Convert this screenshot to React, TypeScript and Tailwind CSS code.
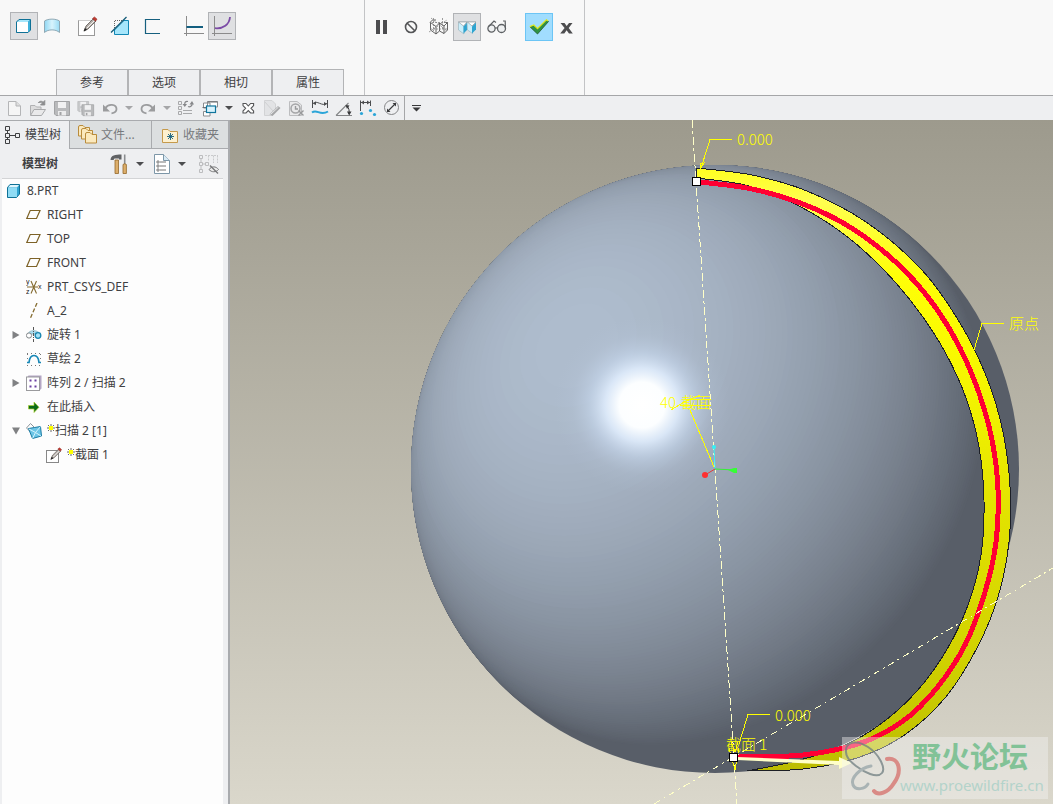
import type { ReactNode } from 'react'
import clsx from 'clsx'

type Point = [number, number]

/* ---------- geometry helpers ---------- */

// Catmull-Rom through the points, as cubic bezier segments
function smooth(points: Point[], start = 'M') {
  let d = `${start}${points[0][0]} ${points[0][1]}`
  for (let i = 0; i < points.length - 1; i++) {
    const p0 = points[i - 1] ?? points[i]
    const p1 = points[i]
    const p2 = points[i + 1]
    const p3 = points[i + 2] ?? p2
    d += `C${p1[0] + (p2[0] - p0[0]) / 6} ${p1[1] + (p2[1] - p0[1]) / 6} ${p2[0] - (p3[0] - p1[0]) / 6} ${p2[1] - (p3[1] - p1[1]) / 6} ${p2[0]} ${p2[1]}`
  }
  return d
}

const outerEdge: Point[] = [
  [696, 168], [752, 175], [807, 191], [866, 222], [921, 269], [960, 323], [987, 378], [1003, 432],
  [1010, 487], [1009, 542], [998, 597], [977, 648], [945, 698], [903, 736], [857, 758], [803, 769], [747, 771],
]

const innerEdge: Point[] = [
  [696, 178], [745, 185], [793, 203], [841, 232], [882, 268], [917, 309], [945, 352], [966, 398],
  [979, 447], [984, 500], [981, 555], [968, 605], [946, 651], [917, 691], [882, 723], [843, 746],
  [796, 761], [747, 771],
]

const trajectory: Point[] = [
  [700, 182], [747, 188], [792, 200], [836, 219], [873, 243], [907, 273], [936, 308], [960, 348],
  [979, 393], [992, 440], [998, 490], [996, 542], [985, 592], [965, 645], [936, 689], [903, 721],
  [861, 743], [803, 755], [737, 757],
]

const sphere = { cx: 715, cy: 469, r: 304 }
const light = { x: -0.46, y: -0.41, z: 0.79 }
const LEVELS = 85

// One closed region for every brightness step: the part of the sphere lit at least that much
function shadeRegions() {
  const { r } = sphere
  const flat = Math.hypot(light.x, light.y)
  const regions = []
  for (let i = 1; i < LEVELS; i++) {
    const c = i / LEVELS
    const k = Math.sqrt(1 - c * c)
    const a = r * k * light.z
    const b = r * k
    const u = c * flat * r
    let d = `M${u - a} 0A${a} ${b} 0 1 1 ${u + a} 0A${a} ${b} 0 1 1 ${u - a} 0Z`
    if (c < flat) {
      const tu = (r * c) / flat
      const tv = Math.sqrt(r * r - tu * tu)
      d = `M${tu} ${-tv}A${r} ${r} 0 0 1 ${tu} ${tv}A${a} ${b} 0 0 1 ${u - a} 0A${a} ${b} 0 0 1 ${tu} ${-tv}Z`
    }
    regions.push({ d, fill: `rgb(${88 + 87 * c},${94 + 95 * c},${104 + 102 * c})` })
  }
  return regions
}

const regions = shadeRegions()
const lightAngle = (Math.atan2(light.y, light.x) * 180) / Math.PI

/* ---------- icons ---------- */

function Icon({ children, small }: { children: ReactNode; small?: boolean }) {
  return (
    <svg viewBox={small ? '0 0 16 16' : '0 0 20 20'} className={clsx('shrink-0', small ? 'size-4' : 'size-5')} fill="none" aria-hidden="true">
      {children}
    </svg>
  )
}

const SolidIcon = () => (
  <Icon>
    <path d="M2.5 6L5 3.5H16.5V14L14 16.5H2.5Z" fill="#1a86b0" stroke="#0f7196" />
    <path d="M3 6L5.2 4H16L14 6Z" fill="#a6e6fb" />
    <path d="M14 6L16 4V14L14 16Z" fill="#3fb2dc" />
    <rect x="3" y="6" width="11" height="10" fill="#fff" />
  </Icon>
)

const SurfaceIcon = () => (
  <Icon>
    <path d="M2.5 5C6 2.5 14 2.5 17.5 5V16.5C14 13 6 13 2.5 16.5Z" fill="url(#quilt)" stroke="#8fa9b5" />
  </Icon>
)

const PencilShape = () => (
  <>
    <path d="M6 15L8 10L15 3L18 5L10 13Z" fill="#b5afaa" stroke="#5d5854" strokeWidth=".8" />
    <path d="M9 12L16.5 4.5" stroke="#f3f1ef" strokeWidth="1" />
    <path d="M14.5 2.5L16.5 1L19 3.2L17.5 5.2Z" fill="#c23b32" stroke="#8f2a24" strokeWidth=".6" />
    <path d="M5.6 15.4L7 12L9 13.8Z" fill="#222" />
  </>
)

const SketchIcon = () => (
  <Icon>
    <rect x=".5" y="4.5" width="16" height="15" fill="#fff" stroke="#9a9a9a" />
    <path d="M.5 4.5H16.5" stroke="#ccc" />
    <PencilShape />
  </Icon>
)

const RemoveMaterialIcon = () => (
  <Icon>
    <path d="M4.5 14V4.5H14" stroke="#666" strokeDasharray="1 1" />
    <path d="M18.5 4.5V18.5H4.5V14L14 4.5Z" fill="#a6e6fb" stroke="#1287b4" />
    <path d="M1 16.5L16.5 1" stroke="#145b78" strokeWidth="1.3" />
  </Icon>
)

const ThickenIcon = () => (
  <Icon>
    <path d="M18 3.5H3.5V17.5H18" stroke="#16607f" strokeWidth="1.2" />
  </Icon>
)

const ConstantIcon = () => (
  <Icon>
    <path d="M2.5 0V20M0 17.5H20" stroke="#8b8b8b" />
    <path d="M2.5 11H19" stroke="#135f80" strokeWidth="2" />
  </Icon>
)

const VariableIcon = () => (
  <Icon>
    <path d="M2.5 0V20M0 17.5H20" stroke="#8b8b8b" />
    <path d="M3 12.2C11 13 17.5 8.5 18 1" stroke="#7c4ca6" strokeWidth="1.8" />
  </Icon>
)

const PauseIcon = () => (
  <Icon>
    <path d="M5 3H9V17H5ZM12 3H16V17H12Z" fill="#4d4d4f" />
  </Icon>
)

const NoPreviewIcon = () => (
  <Icon>
    <circle cx="10" cy="10" r="5.5" stroke="#555658" strokeWidth="1.6" />
    <path d="M6 6L14 14" stroke="#555658" strokeWidth="1.6" />
  </Icon>
)

const WireframeIcon = () => (
  <Icon>
    <path d="M1 5.5L3.5 3H7M1.5 5.5V13L7 17L10.5 14V6L7 9.5V17M1.5 5.5L7 9.5M10.5 14L15 16.5L18.5 13V5.5L15 9V16.5M10.5 6L15 9M18.5 5.5H15" stroke="#555" strokeWidth=".9" />
    <path d="M4.5 1V14M13.5 1V12M0 15L18 3M2 1L18 14M1 12H19M3 5.5H17" stroke="#858585" strokeWidth=".8" strokeDasharray="2 1" />
  </Icon>
)

const VerifyIcon = () => (
  <Icon>
    <path d="M1.5 5H10L7 8.5V17L1.5 13Z" fill="#c9effc" stroke="#9bb6c0" strokeWidth=".7" />
    <path d="M10 5.5V13L6.5 16.5V9.5Z" fill="#2fa4d0" />
    <path d="M10 5H19L15.5 8.5V16.5L10.5 13Z" fill="#c9effc" stroke="#9bb6c0" strokeWidth=".7" />
    <path d="M19 5.5V12.5L15 16.5V9.5Z" fill="#2fa4d0" />
    <path d="M1.5 5H10L6.5 9ZM10.5 5H19L15 9Z" fill="#fff" stroke="#8a8f92" strokeWidth=".6" />
  </Icon>
)

const GlassesIcon = () => (
  <Icon>
    <circle cx="4.5" cy="11.5" r="3.6" fill="#eef0f1" stroke="#5d6063" strokeWidth="1.3" />
    <circle cx="14.5" cy="11.5" r="4" fill="#eef0f1" stroke="#5d6063" strokeWidth="1.3" />
    <path d="M8 11L10.8 10.8M1.2 10L7 4L9 5.5M18.4 11L18.2 4L16 4" stroke="#5d6063" strokeWidth="1.2" />
  </Icon>
)

const AcceptIcon = () => (
  <Icon>
    <path d="M1.2 10L5 8.5L8.5 12L17.5 3.2L19.5 4.5L8.5 17Z" fill="#2e9444" stroke="#23592f" strokeWidth=".8" />
    <path d="M.8 9.6L4.8 8L8.5 11.6L17.4 2.8L19.2 4" stroke="#ddea1e" strokeWidth="1.3" />
  </Icon>
)

const CancelIcon = () => (
  <Icon>
    <path d="M3.5 6H7.5L9.7 9L12 6H15.5L11.7 11L15.8 16.5H12L9.6 13.3L7.3 16.5H3.2L7.6 11Z" fill="#4d4d4f" />
  </Icon>
)

const NewIcon = () => (
  <Icon>
    <path d="M4.5 3.5H12L16.5 8V17.5H4.5Z" fill="#f5f5f5" stroke="#b4b5b7" />
    <path d="M12 3.5V8H16.5" fill="#ddd" stroke="#b4b5b7" />
  </Icon>
)

const OpenIcon = () => (
  <Icon>
    <path d="M2.5 17V7.5H7L8.5 9H13V11" fill="#dcdcdd" stroke="#b0b1b3" />
    <path d="M2.5 17.5L6 11.5H17.5L13.5 17.5Z" fill="#e9e9ea" stroke="#a9aaac" />
    <path d="M10 5C12 2.5 14 3 15.5 4.5M16.8 2.5V7H12.5Z" stroke="#8c8d8f" fill="#8c8d8f" strokeWidth=".9" />
  </Icon>
)

const DiskShape = () => (
  <>
    <path d="M2.5 3.5H17.5V17.5H4L2.5 16Z" fill="#b9babc" stroke="#a2a3a5" />
    <rect x="6" y="4" width="8" height="6" fill="#f1f1f2" />
    <rect x="6" y="13" width="8" height="4.5" fill="#ececed" />
    <rect x="7.5" y="14" width="2" height="3" fill="#a2a3a5" />
  </>
)

const SaveIcon = () => (
  <Icon>
    <DiskShape />
  </Icon>
)

const SaveCopyIcon = () => (
  <Icon>
    <g transform="translate(0 1) scale(.72)" opacity=".7">
      <DiskShape />
    </g>
    <g transform="translate(4 4) scale(.78)">
      <DiskShape />
    </g>
  </Icon>
)

const UndoIcon = () => (
  <Icon>
    <path d="M5.5 10C8 5.5 16.5 6 16.5 11C16.5 14 14 15 11.5 15.3" stroke="#9b9c9e" strokeWidth="1.8" />
    <path d="M3 6.5V13.5H10Z" fill="#9b9c9e" />
  </Icon>
)

const RedoIcon = () => (
  <Icon>
    <path d="M14.5 10C12 5.5 3.5 6 3.5 11C3.5 14 6 15 8.5 15.3" stroke="#9b9c9e" strokeWidth="1.8" />
    <path d="M17 6.5V13.5H10Z" fill="#9b9c9e" />
  </Icon>
)

const RegenerateIcon = () => (
  <Icon>
    <path d="M2.5 3.5H5.5V6.5H2.5ZM2.5 8.5H5.5V11.5H2.5ZM2.5 13.5H5.5V16.5H2.5ZM7 12.5H16M7 15.5H16" stroke="#a8a9ab" />
    <path d="M9 7C8 4 10 3 12 3.5M16 5.5C16.5 8 14 9.5 12 8.5" stroke="#86878a" strokeWidth="1.2" />
    <path d="M6.5 6H11L8.8 9ZM16 3L18 6.5H13.5Z" fill="#86878a" />
  </Icon>
)

const WindowsIcon = () => (
  <Icon>
    <path d="M7.5 3.5H17.5V9H7.5ZM3.5 5H10V10H3.5ZM3.5 13.5H10V18H3.5Z" fill="#fff" stroke="#8a8c8f" />
    <path d="M7.5 4H17.5M2.5 9.5H8" stroke="#6c6e71" />
    <rect x="6.5" y="8" width="9" height="6.5" fill="#d8f3fd" stroke="#10759d" strokeWidth="1.2" />
  </Icon>
)

const CloseWindowIcon = () => (
  <Icon>
    <path d="M5 5.5H8L10.3 8L12.6 5.5H15.6V7.5L13 10.3L15.6 13V15H12.6L10.3 12.6L8 15H5V13L7.6 10.3L5 7.5Z" fill="#fff" stroke="#555658" strokeWidth="1.1" />
  </Icon>
)

const EditPageIcon = () => (
  <Icon>
    <path d="M2.5 2.5H10L13.5 6V14L9 17.5H2.5Z" fill="#e2e3e5" stroke="#d2d3d5" />
    <path d="M3 4L11 13" stroke="#cfd0d2" />
    <path d="M7.5 16.5L16 8L18.5 10L10.5 18Z" fill="#a6a7a9" />
    <path d="M8.5 16.5L16.5 9" stroke="#e6e7e8" />
  </Icon>
)

const FindIcon = () => (
  <Icon>
    <path d="M3.5 3.5H11L15.5 7V17.5H3.5Z" fill="#e9e9ea" stroke="#bcbdbf" />
    <circle cx="9.5" cy="10.5" r="4.5" stroke="#a4a5a7" strokeWidth="1.5" />
    <path d="M9.5 8V11H12M12.5 12.5L17.5 17.5M17.5 12.5L12.5 17.5" stroke="#999a9c" strokeWidth="1.4" />
  </Icon>
)

const CurveDistanceIcon = () => (
  <Icon>
    <path d="M2.5 2V10M17.5 2V10M3 5.5C7 1.5 12 9 17 5.5" stroke="#4c4d4f" />
    <path d="M3 5.8L6 3.2V7ZM17 5.8L14 8V4Z" fill="#4c4d4f" />
    <path d="M2 14.5C7 10.5 10 18.5 18 13.5" stroke="#2ba5d8" strokeWidth="2" />
  </Icon>
)

const AngleIcon = () => (
  <Icon>
    <path d="M2 17.5H18M2 17.5L14.5 5" stroke="#858688" strokeWidth="1.1" />
    <path d="M13 8C15 10 15.5 13 15 16" stroke="#38393b" />
    <path d="M11.5 7L15.5 7.5L13 11ZM13 13.5H17.5L15.2 17.5Z" fill="#38393b" />
  </Icon>
)

const DistanceIcon = () => (
  <Icon>
    <path d="M2.5 13V2.5M12.5 8V2.5M3 4.5H12" stroke="#4c4d4f" />
    <path d="M3 4.5L6 2.5V6.5ZM12 4.5L9 2.5V6.5Z" fill="#4c4d4f" />
    <circle cx="3.5" cy="15.5" r="1.6" fill="#2ba5d8" />
    <circle cx="12.5" cy="12.5" r="1.6" fill="#2ba5d8" />
    <circle cx="16.5" cy="16.5" r="1.6" fill="#2ba5d8" />
  </Icon>
)

const DiameterIcon = () => (
  <Icon>
    <circle cx="9.5" cy="9.5" r="7" stroke="#848587" />
    <path d="M5.5 13.5L13.5 5.5" stroke="#38393b" strokeWidth="1.1" />
    <path d="M14 5V8.5L10.5 5ZM5 14V10.5L8.5 14Z" fill="#38393b" />
  </Icon>
)

const TreeTabIcon = () => (
  <Icon>
    <path d="M3.5 1.5H7.5V5.5H3.5ZM3.5 8.5H7.5V12.5H3.5ZM3.5 14.5H7.5V18.5H3.5ZM13.5 8.5H17.5V12.5H13.5ZM7.5 10.5H13.5M5.5 5.5V8.5M5.5 12.5V14.5" stroke="#3f4042" />
  </Icon>
)

const FolderShape = () => <path d="M.5 11V2Q.5 .5 2 .5H5L7 2.5H11.5V11Z" fill="#fbe9bd" stroke="#b98c3c" />

const FoldersIcon = () => (
  <Icon>
    <FolderShape />
    <g transform="translate(3 3)">
      <FolderShape />
    </g>
    <g transform="translate(7 7)">
      <FolderShape />
    </g>
  </Icon>
)

const FavoriteIcon = () => (
  <Icon>
    <path d="M2.5 17.5V4.5H8L10 6.5H17.5V17.5Z" fill="#fdf0cf" stroke="#c59a4c" />
    <path d="M10.5 8V15M7 11.5H14M8 9L13 14M13 9L8 14" stroke="#135f80" strokeWidth=".9" />
  </Icon>
)

const ToolsIcon = () => (
  <Icon>
    <path d="M6 6H9.5V19.5H6Z" fill="#dcae6b" stroke="#94682a" strokeWidth=".8" />
    <path d="M1.5 6C2 1 6 .5 12.5 .5V5.5H10V4.5H5.5L4.5 6Z" fill="#606265" />
    <path d="M15.7 .5V10" stroke="#8a8c8f" strokeWidth="1.6" />
    <path d="M14 10.5Q15.7 9 17.4 10.5V19.5H14Z" fill="#dcae6b" stroke="#94682a" strokeWidth=".8" />
  </Icon>
)

const SettingsPageIcon = () => (
  <Icon>
    <path d="M3.5 .5H12.5L18.5 6.5V19.5H3.5Z" fill="#fff" stroke="#7d97a8" />
    <path d="M12.5 .5V6.5H18.5" fill="#d8eaf5" stroke="#7d97a8" />
    <path d="M9 8H15M9 12H15M9 16H15" stroke="#777" />
    <path d="M6 7H8V9H6ZM6 11H8V13H6ZM6 15H8V17H6Z" stroke="#666" strokeWidth=".8" />
  </Icon>
)

const HiddenTreeIcon = () => (
  <Icon>
    <path d="M.5 1.5H3.5V4.5H.5ZM.5 8.5H3.5V11.5H.5ZM.5 15.5H3.5V18.5H.5ZM6.5 8.5H9.5V11.5H6.5ZM3.5 10H6.5M2 4.5V8.5M2 11.5V15.5" stroke="#bcbdbf" />
    <path d="M6 1.5H19M9.5 1.5V7M14.5 1.5V9M18.5 1.5V9" stroke="#c9cacc" strokeDasharray="2 1" />
    <path d="M10 15.5C12.5 12 17 12 19.5 15.5C17 18.5 12.5 18.5 10 15.5Z" fill="#eee" stroke="#77787a" />
    <path d="M11 11.5L19 19.5" stroke="#77787a" strokeWidth="1.4" />
  </Icon>
)

const PartIcon = () => (
  <Icon small>
    <path d="M1.5 4.5L4 1.5H13.5V11L10.5 14.5H1.5Z" fill="#2fa4d0" stroke="#0f7196" />
    <rect x="2" y="5" width="9" height="9" fill="#8fdcf5" />
    <path d="M2 4.6L4.3 2H13L11 4.6Z" fill="#dff6fd" />
  </Icon>
)

const PlaneIcon = () => (
  <Icon small>
    <path d="M4.2 3.5H14L10.5 11.5H.8Z" stroke="#7d6227" strokeWidth="1.2" />
  </Icon>
)

const CsysIcon = () => (
  <Icon small>
    <path d="M1 8H12M5 2L10.5 14.5M10.5 2L5 14.5" stroke="#846b30" strokeWidth="1.1" />
    <g fill="#222" fontFamily="Liberation Sans, sans-serif" fontSize="7">
      <text x="0" y="5">y</text>
      <text x="0" y="15">z</text>
      <text x="12" y="10">x</text>
    </g>
  </Icon>
)

const AxisIcon = () => (
  <Icon small>
    <path d="M11 0L4 16" stroke="#846b30" strokeWidth="1.3" strokeDasharray="4 2" />
  </Icon>
)

const RevolveIcon = () => (
  <Icon small>
    <path d="M2 7C3 2.5 12 2.5 14 7Z" fill="#a9dcef" stroke="#8cb7c7" strokeWidth=".8" />
    <circle cx="3" cy="8.5" r="2.6" fill="#fff" stroke="#84888b" />
    <circle cx="12" cy="8.5" r="2.8" fill="#a6e3f8" stroke="#1a86b0" strokeWidth="1.3" />
    <path d="M7.5 0V16" stroke="#555" strokeDasharray="3 1 1 1" />
  </Icon>
)

const CurveIcon = () => (
  <Icon small>
    <path d="M1 2.5H15M1 14.5H15M1.5 3V15M14.5 3V15" stroke="#777" strokeDasharray="1 3" />
    <path d="M1 11.5H3C3.5 6 6 4.5 8 4.5C10 4.5 12.5 6 13 11.5H15" stroke="#1787b6" strokeWidth="1.7" />
  </Icon>
)

const PatternIcon = () => (
  <Icon small>
    <path d="M1 2.5L2.5 .5H15.5V13.5L13.5 15.5V2.5Z" fill="#b4a6c4" />
    <rect x=".5" y="2" width="13" height="13.5" fill="#fff" stroke="#9a9a9d" />
    <path d="M3.5 5.5H5.5M8.5 5.5H10.5M3.5 11.5H5.5M8.5 11.5H10.5" stroke="#6b3fa0" strokeWidth="2" />
  </Icon>
)

const InsertIcon = () => (
  <Icon small>
    <path d="M2.5 6.5H8V3L13 8.2L8 13.5V10H2.5Z" fill="#0b6b17" stroke="#a8cf2c" strokeWidth=".7" />
  </Icon>
)

const SweepIcon = () => (
  <Icon small>
    <path d="M.5 5L4.5 .5L8.5 4.5L4.5 9Z" fill="#fff" stroke="#8c9499" />
    <path d="M2.5 5.5L8.5 4.5L14.5 3.5L15.5 13L6.5 15.5Z" fill="#6cc5e6" stroke="#1a7ba3" />
    <path d="M3 6L9.5 9.5L15 13M9.5 9.5L14.5 3.5M9.5 9.5L6.5 15.5" stroke="#d5f4fd" />
  </Icon>
)

const SectionIcon = () => (
  <Icon small>
    <rect x=".5" y="3.5" width="12" height="12" fill="#fff" stroke="#888" />
    <g transform="scale(.82)">
      <PencilShape />
    </g>
  </Icon>
)

// Marks a feature that still has to be regenerated
const PendingMark = () => (
  <svg viewBox="0 0 8 8" className="mb-1.5 size-2 shrink-0" aria-hidden="true">
    <path d="M4 0V8M0 4H8M1 1L7 7M7 1L1 7" stroke="#444" strokeWidth=".8" />
    <rect x="2" y="2" width="4" height="4" fill="#ff0" />
  </svg>
)

/* ---------- toolbar pieces ---------- */

function ToolButton({ label, active, accept, className, children }: { label: string; active?: boolean; accept?: boolean; className?: string; children: ReactNode }) {
  return (
    <button
      aria-label={label}
      title={label}
      className={clsx(
        'flex size-7 shrink-0 items-center justify-center border',
        active && 'border-[#b1b3b6] bg-[#dfe0e2]',
        accept && 'border-[#6cc5f5] bg-[#a1ddfe]',
        !active && !accept && 'border-transparent hover:bg-gray-200',
        className,
      )}
    >
      {children}
    </button>
  )
}

function QuickButton({ label, children }: { label: string; children: ReactNode }) {
  return (
    <button aria-label={label} title={label} className="flex size-6 shrink-0 items-center justify-center hover:bg-gray-200">
      {children}
    </button>
  )
}

function Caret({ label, light, className }: { label: string; light?: boolean; className?: string }) {
  return (
    <button aria-label={label} className={clsx('flex h-6 w-3.5 shrink-0 items-center justify-center', className)}>
      <svg viewBox="0 0 8 4" className="h-1 w-2" aria-hidden="true">
        <path d="M0 0H8L4 4Z" fill={light ? '#a5a6a8' : '#4c4d4f'} />
      </svg>
    </button>
  )
}

const panels = ['参考', '选项', '相切', '属性']

function Dashboard() {
  return (
    <header className="flex h-24 shrink-0 border-b border-[#a5a6a8] bg-[#f8f8f8]">
      <div className="flex w-[365px] shrink-0 flex-col justify-between border-r border-[#c3c4c6] pt-3">
        <div className="flex pl-2.5">
          <ToolButton label="实体" active><SolidIcon /></ToolButton>
          <ToolButton label="曲面"><SurfaceIcon /></ToolButton>
          <ToolButton label="草绘" className="ml-2"><SketchIcon /></ToolButton>
          <ToolButton label="移除材料" className="ml-1"><RemoveMaterialIcon /></ToolButton>
          <ToolButton label="加厚" className="ml-1"><ThickenIcon /></ToolButton>
          <ToolButton label="恒定截面" className="ml-3.5"><ConstantIcon /></ToolButton>
          <ToolButton label="可变截面" active><VariableIcon /></ToolButton>
        </div>
        <nav className="ml-14 flex">
          {panels.map((name) => (
            <button key={name} className="h-[26px] w-[72px] border border-b-0 border-[#b3b4b6] bg-[#eeeff1] hover:bg-white">
              {name}
            </button>
          ))}
        </nav>
      </div>
      <div className="flex w-[220px] shrink-0 border-r border-[#c3c4c6] pt-[13px] pl-0.5">
        <ToolButton label="暂停"><PauseIcon /></ToolButton>
        <ToolButton label="无预览" className="ml-0.5"><NoPreviewIcon /></ToolButton>
        <ToolButton label="分离"><WireframeIcon /></ToolButton>
        <ToolButton label="连接" active><VerifyIcon /></ToolButton>
        <ToolButton label="特征预览" className="ml-0.5"><GlassesIcon /></ToolButton>
        <ToolButton label="确定" accept className="ml-3.5"><AcceptIcon /></ToolButton>
        <ToolButton label="取消"><CancelIcon /></ToolButton>
      </div>
    </header>
  )
}

function QuickBar() {
  return (
    <div className="flex h-6 shrink-0 items-center bg-[#eeeff1] pl-0.5">
      <QuickButton label="新建"><NewIcon /></QuickButton>
      <QuickButton label="打开"><OpenIcon /></QuickButton>
      <QuickButton label="保存"><SaveIcon /></QuickButton>
      <QuickButton label="保存副本"><SaveCopyIcon /></QuickButton>
      <QuickButton label="撤消"><UndoIcon /></QuickButton>
      <Caret label="撤消列表" light />
      <QuickButton label="重做"><RedoIcon /></QuickButton>
      <Caret label="重做列表" light />
      <QuickButton label="重新生成"><RegenerateIcon /></QuickButton>
      <QuickButton label="窗口"><WindowsIcon /></QuickButton>
      <Caret label="窗口列表" />
      <QuickButton label="关闭"><CloseWindowIcon /></QuickButton>
      <QuickButton label="编辑"><EditPageIcon /></QuickButton>
      <QuickButton label="查找"><FindIcon /></QuickButton>
      <QuickButton label="曲线长度"><CurveDistanceIcon /></QuickButton>
      <QuickButton label="角度"><AngleIcon /></QuickButton>
      <QuickButton label="距离"><DistanceIcon /></QuickButton>
      <QuickButton label="直径"><DiameterIcon /></QuickButton>
      <button aria-label="自定义" className="flex h-full w-6 items-center justify-center border-l border-[#a5a6a8]">
        <svg viewBox="0 0 9 7" className="h-[7px] w-[9px]" aria-hidden="true">
          <path d="M0 0H9V1H0ZM.5 2.5H8.5L4.5 6.5Z" fill="#38393b" />
        </svg>
      </button>
    </div>
  )
}

/* ---------- model tree ---------- */

type Node = { label: string; icon: ReactNode; level: number; open?: boolean; pending?: boolean }

const nodes: Node[] = [
  { label: '8.PRT', icon: <PartIcon />, level: 0 },
  { label: 'RIGHT', icon: <PlaneIcon />, level: 1 },
  { label: 'TOP', icon: <PlaneIcon />, level: 1 },
  { label: 'FRONT', icon: <PlaneIcon />, level: 1 },
  { label: 'PRT_CSYS_DEF', icon: <CsysIcon />, level: 1 },
  { label: 'A_2', icon: <AxisIcon />, level: 1 },
  { label: '旋转 1', icon: <RevolveIcon />, level: 1, open: false },
  { label: '草绘 2', icon: <CurveIcon />, level: 1 },
  { label: '阵列 2 / 扫描 2', icon: <PatternIcon />, level: 1, open: false },
  { label: '在此插入', icon: <InsertIcon />, level: 1 },
  { label: '扫描 2 [1]', icon: <SweepIcon />, level: 1, open: true, pending: true },
  { label: '截面 1', icon: <SectionIcon />, level: 2, pending: true },
]

const indents = ['pl-1', 'pl-2', 'pl-11']

function TreeRow({ node }: { node: Node }) {
  return (
    <li role="treeitem" aria-expanded={node.open} className={clsx('flex h-6 items-center', indents[node.level])}>
      {node.level === 1 && (
        <span className="flex w-4 shrink-0">
          {node.open !== undefined && (
            <button aria-label={node.open ? '折叠' : '展开'} className="flex size-3 items-center justify-center">
              <svg viewBox="0 0 8 8" className={clsx('size-2', node.open && 'rotate-90')} aria-hidden="true">
                <path d="M.5 0L7.5 4L.5 8Z" fill="#808183" />
              </svg>
            </button>
          )}
        </span>
      )}
      {node.icon}
      <span className="ml-[5px] flex items-center whitespace-pre">
        {node.pending && <PendingMark />}
        {node.label}
      </span>
    </li>
  )
}

function Sidebar() {
  return (
    <aside className="flex w-[230px] shrink-0 flex-col border-t border-r-2 border-[#a9abae] bg-[#eeeff1]">
      <div role="tablist" className="flex h-7 shrink-0">
        <button role="tab" aria-selected="true" className="flex w-[69px] items-center gap-[3px] pl-0.5 whitespace-nowrap">
          <TreeTabIcon />
          模型树
        </button>
        <button role="tab" aria-selected="false" className="flex w-[82px] items-center gap-[3px] border-b border-l border-[#a9abae] bg-[#dcdfe0] pl-2 whitespace-nowrap text-[#77797c]">
          <FoldersIcon />
          文件...
        </button>
        <button role="tab" aria-selected="false" className="flex flex-1 items-center gap-[3px] border-b border-l border-[#a9abae] bg-[#dcdfe0] pl-2 whitespace-nowrap text-[#77797c]">
          <FavoriteIcon />
          收藏夹
        </button>
      </div>
      <div className="flex h-[29px] shrink-0 items-center pl-[22px]">
        <h2 className="w-[87px] font-bold">模型树</h2>
        <button aria-label="工具"><ToolsIcon /></button>
        <Caret label="工具列表" className="ml-1" />
        <button aria-label="设置" className="ml-1"><SettingsPageIcon /></button>
        <Caret label="设置列表" className="ml-1" />
        <button aria-label="隐藏的项" className="ml-2.5"><HiddenTreeIcon /></button>
      </div>
      <ul role="tree" className="mr-[5px] ml-0.5 flex-1 border-t border-[#d3d4d6] bg-[#fdfdfd]">
        {nodes.map((node) => (
          <TreeRow key={node.label} node={node} />
        ))}
      </ul>
    </aside>
  )
}

/* ---------- graphics area ---------- */

function Viewport() {
  return (
    <main className="relative min-w-0 flex-1 overflow-hidden bg-linear-to-b from-[#9d9a8d] to-[#dad7cb]">
      <svg viewBox="230 120 823 684" preserveAspectRatio="xMinYMin slice" className="absolute inset-0 size-full" fill="none">
        <defs>
          <clipPath id="ball"><circle {...sphere} /></clipPath>
          <radialGradient id="glint">
            <stop offset="0" stopColor="#fff" />
            <stop offset=".26" stopColor="#fcfeff" />
            <stop offset=".42" stopColor="#e2efff" stopOpacity=".85" />
            <stop offset=".6" stopColor="#cbdcf2" stopOpacity=".5" />
            <stop offset=".8" stopColor="#bccbe0" stopOpacity=".16" />
            <stop offset="1" stopColor="#b4c3d8" stopOpacity="0" />
          </radialGradient>
          <linearGradient id="band" x1="0" y1="165" x2="0" y2="772" gradientUnits="userSpaceOnUse">
            <stop offset="0" stopColor="#ffff1c" />
            <stop offset=".06" stopColor="#ffff50" />
            <stop offset=".18" stopColor="#ffff08" />
            <stop offset=".3" stopColor="#fafa00" />
            <stop offset=".55" stopColor="#e4e400" />
            <stop offset=".8" stopColor="#d2d200" />
            <stop offset="1" stopColor="#bcbc00" />
          </linearGradient>
          <linearGradient id="quilt" x1="0" y1="0" x2="1" y2="0">
            <stop offset="0" stopColor="#8fd6f2" />
            <stop offset=".5" stopColor="#d8f4fd" />
            <stop offset="1" stopColor="#9adcf5" />
          </linearGradient>
        </defs>

        {/* Sphere */}
        <circle {...sphere} fill="#585e68" />
        <g clipPath="url(#ball)">
          <g transform={`translate(${sphere.cx} ${sphere.cy}) rotate(${lightAngle})`}>
            {regions.map((region) => (
              <path key={region.fill} d={region.d} fill={region.fill} />
            ))}
          </g>
          <circle cx="642" cy="405" r="88" fill="url(#glint)" />
        </g>

        {/* Swept band and its trajectory */}
        <path d={`${smooth(outerEdge)}${smooth([...innerEdge].reverse(), 'L')}Z`} fill="url(#band)" stroke="#1c1f26" shapeRendering="crispEdges" />
        <path d={smooth(trajectory)} stroke="#ff0033" strokeWidth="5" shapeRendering="crispEdges" />

        {/* Datum axes */}
        <g stroke="#ffffc8" shapeRendering="crispEdges">
          <path d="M692 120L737 804" strokeDasharray="8 3 3 3" />
          <path d="M654 804L1053 568" strokeDasharray="7 4 2 4" />
        </g>

        {/* Spin centre */}
        <path d="M715 469L714 448" stroke="#35f0f5" />
        <path d="M715 469L705 475" stroke="#e23a3a" />
        <path d="M715 469L735 470" stroke="#35f035" />
        <circle cx="714" cy="447" r="2" fill="#35f0f5" />
        <circle cx="705" cy="475" r="3" fill="#ff3030" />
        <path d="M728 470L734 468H737V473H734Z" fill="#35ff35" />

        {/* Start direction */}
        <path d="M737 757L839 761V757L852 763L839 769V765L737 760Z" fill="#ffffc8" />

        {/* Leaders */}
        <g stroke="#ff0" shapeRendering="crispEdges">
          <path d="M701 168L710 139.5H732M700 169V164L704 163L701 168" />
          <path d="M1004 323.5H982L974 350L970 360" />
          <path d="M739 744L748 714.5H770" />
          <path d="M690 410L714 467M671 410L684 402L700 395M686 399H711M680 405H711" />
          <path d="M729 748L735 770L739 748M731 742L735 752L738 742" />
        </g>
        <g fill="#fff" stroke="#000" shapeRendering="crispEdges">
          <rect x="692.5" y="177.5" width="8" height="8" />
          <rect x="729.5" y="753.5" width="8" height="8" />
        </g>

        {/* Notes */}
        <g fill="#ff0" fontSize="15" fontWeight="300" fontFamily="'Noto Sans CJK SC', sans-serif">
          <text x="737" y="145">0.000</text>
          <text x="1009" y="329">原点</text>
          <text x="775" y="721">0.000</text>
          <text x="726" y="750">截面 1</text>
          <text x="660" y="408">40</text>
          <text x="681" y="408">截面</text>
        </g>

        {/* Forum stamp */}
        <rect x="842" y="737" width="206" height="62" fill="#f4f4f2" fillOpacity=".42" />
        <g strokeLinecap="round">
          <path d="M846 752C845 742 856 739 868 747C879 754 886 768 882 773C877 779 864 772 856 766C848 760 846 755 846 752" stroke="#6f7d80" strokeWidth="2" strokeOpacity=".75" />
          <path d="M871 766C860 768 850 778 853 785C856 791 865 789 868 784" stroke="#a9b3b4" strokeWidth="3" />
          <path d="M887 759C900 757 902 772 894 783C888 793 878 796 874 791" stroke="#d98b86" strokeWidth="4" />
        </g>
        <text x="912" y="768" fill="#82c297" fontSize="29" fontWeight="700" fontFamily="'Noto Sans CJK SC', sans-serif">野火论坛</text>
        <text x="900" y="791" fill="#b3d3ca" fontSize="15" fontFamily="'Noto Sans', sans-serif">www.proewildfire.cn</text>
      </svg>
    </main>
  )
}

export default function App() {
  return (
    <div className="flex h-screen min-h-[560px] flex-col bg-[#eeeff1] font-['Noto_Sans','Noto_Sans_CJK_SC',sans-serif] text-xs text-[#3f4042]">
      <Dashboard />
      <QuickBar />
      <div className="flex min-h-0 flex-1">
        <Sidebar />
        <Viewport />
      </div>
    </div>
  )
}
